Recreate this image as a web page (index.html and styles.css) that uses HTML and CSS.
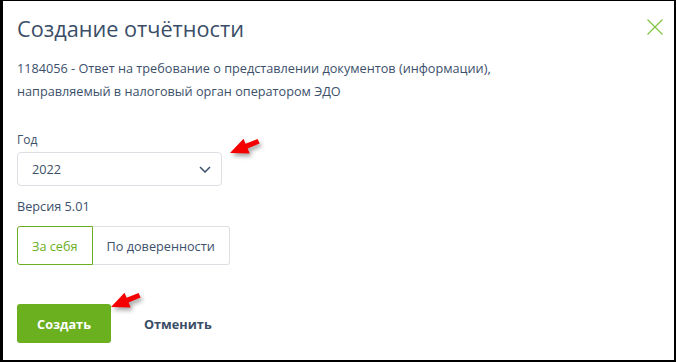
FILE: index.html
```html
<!DOCTYPE html>
<html lang="ru">
<head>
  <meta charset="UTF-8">
  <title>Создание отчётности</title>
  <meta name="viewport" content="width=device-width, initial-scale=1">
  <link rel="stylesheet" href="styles.css">
</head>
<body>

<div class="frame">
  <div class="dialog-head">
    <h2 class="dialog-title">Создание отчётности</h2>
    <button class="close-btn" type="button" aria-label="Закрыть">
      <svg width="16" height="16" viewBox="0 0 16 16">
        <path d="M0.5 0.5 L15.5 15.5 M15.5 0.5 L0.5 15.5" stroke="#7cc23a" stroke-width="1.1" fill="none"/>
      </svg>
    </button>
  </div>

  <p class="report-desc">
    1184056 - Ответ на требование о представлении документов (информации),<br>
    направляемый в налоговый орган оператором ЭДО
  </p>

  <label class="field-label" for="year">Год</label>
  <div class="select-box" id="year">
    <span>2022</span>
    <svg width="12" height="7" viewBox="0 0 12 7">
      <path d="M1 1 L6 6 L11 1" stroke="#3c506b" stroke-width="1.5" fill="none"/>
    </svg>
  </div>

  <div class="version">Версия 5.01</div>

  <div class="segmented">
    <button class="segment active" type="button">За себя</button>
    <button class="segment" type="button">По доверенности</button>
  </div>

  <div class="actions">
    <button class="btn-create" type="submit">Создать</button>
    <button class="btn-cancel" type="button">Отменить</button>
  </div>

  <!-- стрелки-пометки поверх формы -->
  <svg class="mark-arrow arrow-year" width="36" height="24" viewBox="0 0 36 24">
    <polygon points="2,19 15.5,4.7 17.6,9.8 29.6,4.9 31.6,9.5 19.6,14.4 21.7,19.5" fill="#f50000"/>
  </svg>
  <svg class="mark-arrow arrow-create" width="36" height="24" viewBox="0 0 36 24">
    <polygon points="2,19 15.5,4.7 17.6,9.8 29.6,4.9 31.6,9.5 19.6,14.4 21.7,19.5" fill="#f50000"/>
  </svg>
</div>

</body>
</html>
```

FILE: styles.css
```css
* {
  box-sizing: border-box;
}

body {
  margin: 0;
  font-family: "Open Sans", Arial, sans-serif;
  color: #3c506b;
  background: #fff;
}

.frame {
  position: relative;
  width: 676px;
  height: 362px;
  border: 2px solid #000;
  border-left-width: 3px;
  border-top-width: 1px;
  padding: 14px 11px 0 14px;
  background: #fff;
}

.dialog-head {
  display: flex;
  justify-content: space-between;
  align-items: flex-start;
}

.dialog-title {
  margin: 0;
  font-size: 21.7px;
  line-height: 28px;
  font-weight: 400;
  color: #3a4d66;
}

.close-btn {
  margin-top: 4px;
  padding: 0;
  border: none;
  background: none;
  width: 16px;
  height: 16px;
  cursor: pointer;
}

.close-btn svg {
  display: block;
}

.report-desc {
  margin: 14px 0 0;
  font-size: 12.7px;
  line-height: 23px;
}

.field-label {
  display: block;
  margin-top: 29px;
  font-size: 12px;
  line-height: 16px;
}

.select-box {
  margin-top: 4px;
  width: 205px;
  height: 34px;
  display: flex;
  align-items: center;
  justify-content: space-between;
  padding: 0 10px 0 14px;
  border: 1px solid #dcdfe3;
  border-radius: 4px;
  font-size: 12.7px;
}

.select-box svg {
  display: block;
}

.version {
  margin-top: 11px;
  font-size: 12.7px;
  line-height: 18px;
}

.segmented {
  display: flex;
  margin-top: 11px;
}

.segment {
  height: 39px;
  padding: 0 14px;
  font-family: inherit;
  font-size: 12.7px;
  color: #3c506b;
  background: #fff;
  border: 1px solid #dcdfe3;
  cursor: pointer;
}

.segment:first-child {
  border-radius: 3px 0 0 3px;
}

.segment:last-child {
  border-left: none;
  border-radius: 0 3px 3px 0;
}

.segment.active {
  color: #6aaf23;
  border-color: #6aaf23;
}

.actions {
  display: flex;
  align-items: center;
  margin-top: 39px;
}

.btn-create {
  width: 94px;
  height: 39px;
  border: none;
  border-radius: 3px;
  background: #6bb01f;
  color: #fff;
  font-family: inherit;
  font-size: 12.7px;
  font-weight: 700;
  cursor: pointer;
}

.btn-cancel {
  margin-left: 33px;
  padding: 0;
  border: none;
  background: none;
  color: #3a4d66;
  font-family: inherit;
  font-size: 12.7px;
  font-weight: 700;
  cursor: pointer;
}

.mark-arrow {
  position: absolute;
  filter: drop-shadow(2px 3px 2px rgba(0, 0, 0, 0.35));
}

.arrow-year {
  left: 225px;
  top: 133px;
}

.arrow-create {
  left: 106px;
  top: 287px;
}
```
